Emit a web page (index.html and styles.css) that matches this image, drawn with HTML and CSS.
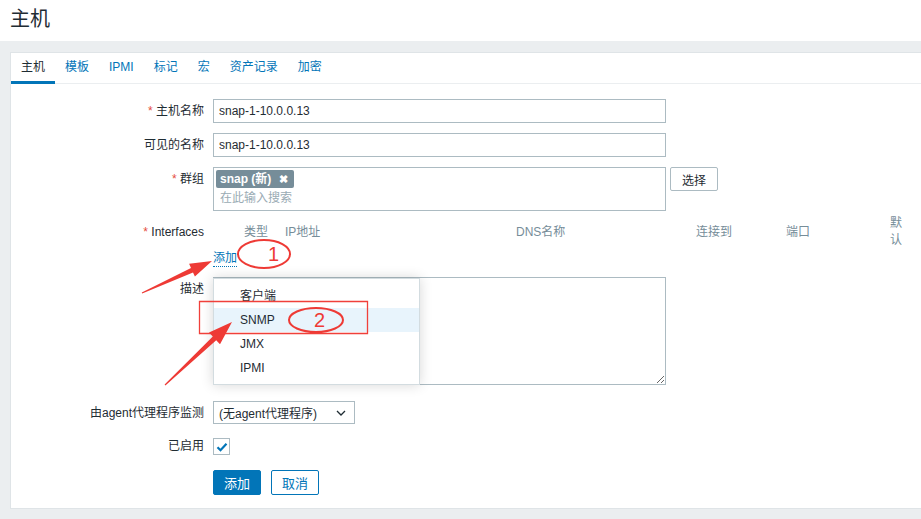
FILE: index.html
```html
<!DOCTYPE html>
<html lang="zh">
<head>
  <meta charset="UTF-8" />
  <title>主机</title>
  <link rel="stylesheet" href="styles.css">
</head>
<body>
  <header class="page-header">
    <h1>主机</h1>
  </header>

  <div class="card">
    <!-- 标签页 -->
    <ul class="tabs">
      <li class="tab active">主机</li>
      <li class="tab">模板</li>
      <li class="tab">IPMI</li>
      <li class="tab">标记</li>
      <li class="tab">宏</li>
      <li class="tab">资产记录</li>
      <li class="tab">加密</li>
    </ul>

    <form class="host-form">
      <div class="form-row">
        <label class="form-label"><span class="req">*</span> 主机名称</label>
        <div class="form-field"><input class="text-input" type="text" value="snap-1-10.0.0.13"></div>
      </div>

      <div class="form-row">
        <label class="form-label">可见的名称</label>
        <div class="form-field"><input class="text-input" type="text" value="snap-1-10.0.0.13"></div>
      </div>

      <div class="form-row row-groups">
        <label class="form-label"><span class="req">*</span> 群组</label>
        <div class="form-field group-field">
          <div class="multiselect">
            <span class="tag">snap (新) <span class="tag-x">✖</span></span>
            <div class="placeholder">在此输入搜索</div>
          </div>
          <button type="button" class="btn-alt">选择</button>
        </div>
      </div>

      <div class="form-row row-interfaces">
        <label class="form-label label-iface"><span class="req">*</span> Interfaces</label>
        <div class="form-field">
          <div class="iface-head">
            <span></span>
            <span>类型</span>
            <span>IP地址</span>
            <span>DNS名称</span>
            <span>连接到</span>
            <span>端口</span>
            <span class="col-default">默认</span>
          </div>
          <div class="add-wrap">
            <a class="link-add">添加</a>
            <!-- 弹出菜单 -->
            <ul class="menu">
              <li>客户端</li>
              <li class="hover">SNMP</li>
              <li>JMX</li>
              <li>IPMI</li>
            </ul>
          </div>
        </div>
      </div>

      <div class="form-row row-desc">
        <label class="form-label label-desc">描述</label>
        <div class="form-field"><textarea class="textarea"></textarea></div>
      </div>

      <div class="form-row row-proxy">
        <label class="form-label">由agent代理程序监测</label>
        <div class="form-field">
          <div class="select">
            <span>(无agent代理程序)</span>
            <svg class="chevron" width="10" height="6" viewBox="0 0 10 6"><path d="M1 1l4 4 4-4" fill="none" stroke="#1f2c33" stroke-width="1.3"/></svg>
          </div>
        </div>
      </div>

      <div class="form-row row-enabled">
        <label class="form-label">已启用</label>
        <div class="form-field">
          <span class="checkbox">
            <svg width="12" height="10" viewBox="0 0 12 10"><path d="M1.5 5.2l3 3 6-6.5" fill="none" stroke="#0275b8" stroke-width="2.2"/></svg>
          </span>
        </div>
      </div>

      <div class="form-row">
        <span></span>
        <div class="form-field buttons">
          <button type="button" class="btn-primary">添加</button>
          <button type="button" class="btn-secondary">取消</button>
        </div>
      </div>
    </form>
  </div>

  <!-- 截图上的红色标注 -->
  <svg class="annotations" width="921" height="519" viewBox="0 0 921 519">
    <g fill="none" stroke="#ee3a35" stroke-width="2">
      <ellipse cx="264" cy="254" rx="26" ry="14"/>
      <ellipse cx="316" cy="320" rx="27" ry="12"/>
    </g>
    <path d="M199.5 301.5H367.5V333.5H199.5Z" fill="none" stroke="#f0403a" stroke-width="1.3"/>
    <g fill="#ee3a35">
      <polygon points="212,261 194.9,276.6 193,272.5 142.2,293.5 141.8,292.5 191,267.9 189.1,263.8"/>
      <polygon points="232,322 220,344.2 216.2,340.2 165.4,385.4 164.6,384.6 212.8,336.6 209,332.6"/>
    </g>
    <text x="268" y="261" class="anno-num">1</text>
    <text x="314" y="327" class="anno-num">2</text>
  </svg>
</body>
</html>
```

FILE: styles.css
```css
body {
  margin: 0;
  font-family: "Liberation Sans", Arial, "Noto Sans CJK SC", sans-serif;
  font-size: 12px;
  color: #1f2c33;
  background: #ebeef0;
  position: relative;
  height: 519px;
  overflow: hidden;
}

.page-header {
  background: #fff;
  height: 41px;
  padding: 0 10px;
}
.page-header h1 {
  margin: 0;
  font-size: 20px;
  font-weight: normal;
  line-height: 38px;
}

.card {
  margin: 11px 0 0 10px;
  background: #fff;
  border: 1px solid #dfe4e7;
  border-right: 0;
  height: 455px;
}

/* 标签页 */
.tabs {
  list-style: none;
  margin: 0;
  padding: 0;
  display: flex;
  border-bottom: 1px solid #ebeef0;
  height: 30px;
}
.tab {
  padding: 0 10px;
  line-height: 28px;
  color: #0275b8;
  border-bottom: 3px solid transparent;
  height: 28px;
}
.tab.active {
  color: #1f2c33;
  border-bottom-color: #0275b8;
}

/* 表单 */
.host-form {
  padding-top: 15px;
}
.form-row {
  display: grid;
  grid-template-columns: 193px 1fr;
  column-gap: 9px;
  margin-bottom: 10px;
}
.form-label {
  text-align: right;
  line-height: 24px;
  white-space: nowrap;
}
.req {
  color: #e54d3d;
}
.form-field {
  position: relative;
}

.text-input {
  box-sizing: border-box;
  width: 453px;
  height: 24px;
  border: 1px solid #acbbc2;
  padding: 0 5px;
  font: inherit;
  color: #1f2c33;
  display: block;
}

.row-groups {
  margin-bottom: 4px;
}
.group-field {
  display: flex;
  align-items: flex-start;
  gap: 4px;
}
.multiselect {
  box-sizing: border-box;
  width: 453px;
  height: 44px;
  border: 1px solid #acbbc2;
  padding: 2px 2px 0;
}
.tag {
  display: inline-block;
  background: #768d99;
  color: #fff;
  font-weight: bold;
  line-height: 18px;
  padding: 0 6px 0 4px;
  border-radius: 2px;
}
.tag-x {
  font-size: 11px;
  margin-left: 4px;
}
.placeholder {
  color: #9aabb4;
  line-height: 20px;
  padding-left: 4px;
}
.btn-alt {
  height: 24px;
  width: 48px;
  border: 1px solid #acbbc2;
  background: #fff;
  font: inherit;
  color: #1f2c33;
  border-radius: 2px;
}

/* Interfaces */
.label-iface {
  line-height: 17px;
  padding-top: 9px;
}
.iface-head {
  display: grid;
  grid-template-columns: 31px 41px 231px 180px 90px 104px 14px;
  align-items: center;
  color: #768d99;
  height: 34px;
  line-height: 17px;
}
.col-default {
  word-break: break-all;
}
.add-wrap {
  position: relative;
  display: inline-block;
  margin-top: 1px;
}
.link-add {
  color: #0275b8;
  line-height: 16px;
  display: inline-block;
  border-bottom: 1px dotted #0275b8;
}

.menu {
  position: absolute;
  left: 0;
  top: calc(100% + 11px);
  z-index: 5;
  list-style: none;
  margin: 0;
  padding: 5px 0 4px;
  width: 207px;
  background: #fff;
  border: 1px solid #d3dce0;
  box-shadow: 0 0 12px rgba(0, 0, 0, 0.16);
  box-sizing: border-box;
}
.menu li {
  line-height: 24px;
  padding-left: 26px;
}
.menu li.hover {
  background: #e8f4fc;
}

.row-desc {
  margin-bottom: 16px;
}
.label-desc {
  line-height: 17px;
  padding-top: 4px;
}
.textarea {
  display: block;
  box-sizing: border-box;
  width: 453px;
  height: 108px;
  border: 1px solid #acbbc2;
  margin: 0;
  resize: both;
}

.row-proxy {
  margin-bottom: 13px;
}
.select {
  box-sizing: border-box;
  width: 142px;
  height: 23px;
  border: 1px solid #acbbc2;
  display: flex;
  align-items: center;
  justify-content: space-between;
  padding: 0 8px 0 5px;
}

.row-enabled {
  margin-bottom: 15px;
}
.row-enabled .form-label {
  line-height: 17px;
}
.checkbox {
  box-sizing: border-box;
  width: 17px;
  height: 17px;
  border: 1px solid #acbbc2;
  display: flex;
  align-items: center;
  justify-content: center;
}

.buttons {
  display: flex;
  gap: 10px;
}
.btn-primary,
.btn-secondary {
  height: 25px;
  width: 48px;
  font: inherit;
  font-size: 13px;
  border-radius: 2px;
  padding: 0;
}
.btn-primary {
  background: #0275b8;
  color: #fff;
  border: 1px solid #0275b8;
}
.btn-secondary {
  background: #fff;
  color: #0275b8;
  border: 1px solid #0275b8;
}

/* 标注层 */
.annotations {
  position: absolute;
  left: 0;
  top: 0;
  pointer-events: none;
  z-index: 10;
}
.anno-num {
  fill: #ee3a35;
  font-family: "Liberation Sans", Arial, sans-serif;
  font-size: 20px;
}
```
